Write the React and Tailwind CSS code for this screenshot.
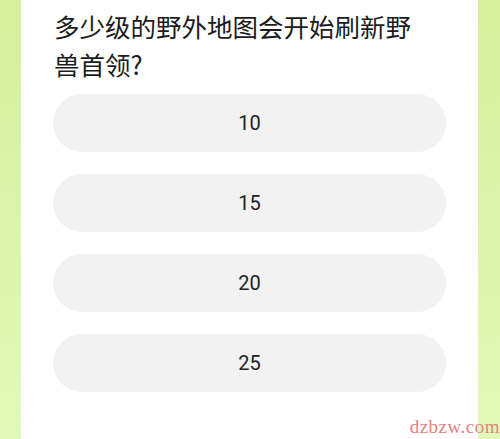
import React from 'react';

const options = ['10', '15', '20', '25'];

const App = () => {
  return (
    <div className="relative flex h-[439px] w-[500px] overflow-hidden bg-white">
      <div className="w-[21px] bg-gradient-to-b from-[#d5ef9c] to-[#e1fab9]" />

      <div className="flex-1 bg-white px-8 pt-[7px]">
        <h1
          className="max-w-[364px] pl-[1px] text-[25.5px] font-normal leading-[38px] text-[#1c1c1c]"
          style={{ fontFamily: '"Noto Sans CJK SC", "Noto Sans", sans-serif' }}
        >
          多少级的野外地图会开始刷新野兽首领?
        </h1>

        <div className="mt-[11px] flex flex-col gap-[22px]">
          {options.map((opt) => (
            <div
              key={opt}
              className="flex h-[58px] items-center justify-center rounded-full bg-[#f2f2f2] text-[20px] text-[#222]"
              style={{ fontFamily: 'Roboto, "Noto Sans", sans-serif' }}
            >
              {opt}
            </div>
          ))}
        </div>
      </div>

      <div className="w-[22px] bg-gradient-to-b from-[#d5ef9c] to-[#e1fab9]" />

      <div
        className="absolute bottom-[3px] right-[0px] text-[19px] leading-none tracking-[0.5px] text-[#e67f7f]"
        style={{ fontFamily: '"Liberation Serif", serif' }}
      >
        dzbzw.com
      </div>
    </div>
  );
};

export default App;
